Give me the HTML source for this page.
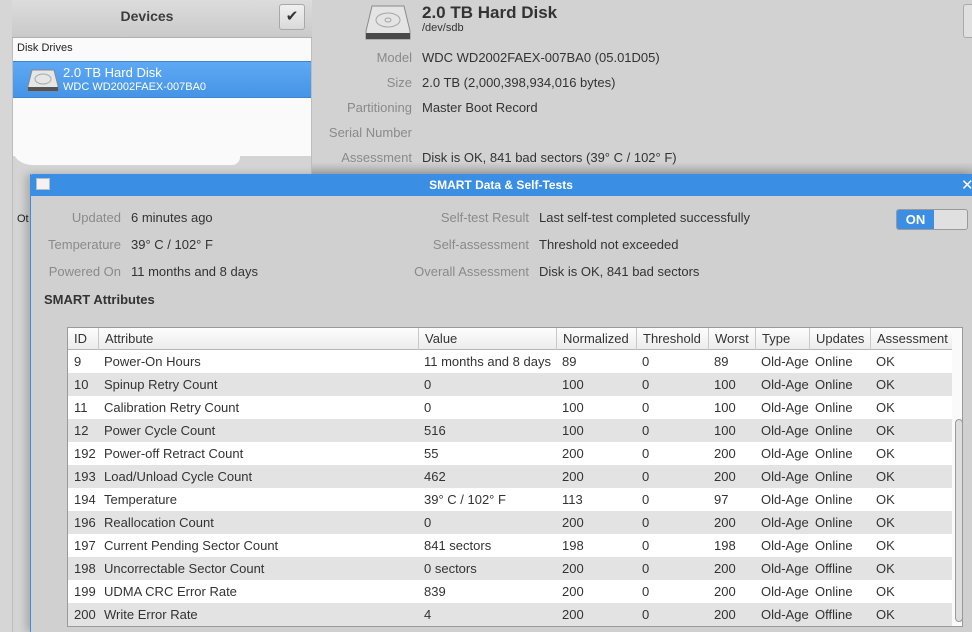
<!DOCTYPE html>
<html><head><meta charset="utf-8"><style>
*{margin:0;padding:0;box-sizing:border-box}
body{width:972px;height:632px;overflow:hidden;background:#d2d2d2;font-family:"Liberation Sans","DejaVu Sans",sans-serif;font-size:13px;color:#333;position:relative}
.abs{position:absolute;white-space:nowrap}
.lbl{color:#8a8a8a;text-align:right}
.hdd{position:absolute}
</style></head><body>
<div class="abs" style="left:0;top:0;width:12px;height:632px;background:#d6d6d6"></div>
<div class="abs" style="left:12px;top:0;width:300px;height:632px;background:#d4d4d4;border-right:1px solid #bdbdbd;border-left:1px solid #bdbdbd"></div>
<div class="abs" style="left:12px;top:0;width:300px;height:38px;background:linear-gradient(#dcdcdc,#cacaca);border-bottom:1px solid #b0b0b0"></div>
<div class="abs" style="left:12px;top:8px;width:270px;text-align:center;font-weight:bold;font-size:14px;color:#3c3c3c">Devices</div>
<div class="abs" style="left:279px;top:4px;width:26px;height:26px;border:1px solid #a8a8a8;border-radius:3px;background:linear-gradient(#f0f0f0,#dadada);text-align:center;line-height:24px;font-size:15px;color:#333">✔</div>
<div class="abs" style="left:13px;top:38px;width:298px;height:118px;background:#fafafa"></div>
<div class="abs" style="left:13px;top:150px;width:227px;height:15px;background:#fafafa;border-radius:0 0 8px 20px/0 0 8px 15px"></div>
<div class="abs" style="left:17px;top:42px;font-size:11px;color:#222">Disk Drives</div>
<div class="abs" style="left:13px;top:61px;width:298px;height:37px;background:linear-gradient(#5ea9f4,#4594e6);border-top:1px solid #3c85d4;border-bottom:1px solid #3c85d4"></div>
<svg class="hdd" style="left:27px;top:69px" width="32" height="24" viewBox="0 0 32 24"><path d="M5 1h22l4 16v5H1v-5z" fill="#e6e6e6" stroke="#888"/><ellipse cx="16" cy="10" rx="8" ry="5" fill="none" stroke="#aaa"/><rect x="1" y="18" width="30" height="4" fill="#555"/></svg>
<div class="abs" style="left:63px;top:65px;color:#fff;font-size:13px">2.0 TB Hard Disk</div>
<div class="abs" style="left:63px;top:81px;color:#fff;font-size:11px">WDC WD2002FAEX-007BA0</div>
<div class="abs" style="left:17px;top:213px;font-size:11px;color:#222">Ot</div>

<svg class="hdd" style="left:365px;top:5px" width="46" height="36" viewBox="0 0 46 36"><path d="M7 1h32l6 25v8H1v-8z" fill="#e4e4e4" stroke="#8a8a8a"/><ellipse cx="23" cy="15" rx="12" ry="7" fill="none" stroke="#a5a5a5"/><ellipse cx="23" cy="15" rx="3" ry="2" fill="none" stroke="#a5a5a5"/><rect x="1" y="28" width="44" height="6" fill="#4a4a4a"/></svg>
<div class="abs" style="left:422px;top:3px;font-size:17px;font-weight:bold;color:#333">2.0 TB Hard Disk</div>
<div class="abs" style="left:422px;top:22px;font-size:11px;color:#333">/dev/sdb</div>
<div class="abs lbl" style="left:312px;width:100px;top:50px">Model</div><div class="abs" style="left:422px;top:50px">WDC WD2002FAEX-007BA0 (05.01D05)</div>
<div class="abs lbl" style="left:312px;width:100px;top:75px">Size</div><div class="abs" style="left:422px;top:75px">2.0 TB (2,000,398,934,016 bytes)</div>
<div class="abs lbl" style="left:312px;width:100px;top:100px">Partitioning</div><div class="abs" style="left:422px;top:100px">Master Boot Record</div>
<div class="abs lbl" style="left:312px;width:100px;top:125px">Serial Number</div>
<div class="abs lbl" style="left:312px;width:100px;top:150px">Assessment</div><div class="abs" style="left:422px;top:150px">Disk is OK, 841 bad sectors (39° C / 102° F)</div>
<div class="abs" style="left:963px;top:4px;width:12px;height:34px;border:1px solid #aaa;border-radius:3px;background:#e0e0e0"></div>
<div class="abs" style="left:312px;top:162px;width:660px;height:12px;background:linear-gradient(rgba(0,0,0,0),rgba(0,0,0,.18))"></div>

<div class="abs" style="left:30px;top:174px;width:942px;height:458px;background:#d0d0d0;border-left:1px solid #3b8be0;box-shadow:-4px 0 8px rgba(0,0,0,.2)"></div>
<div class="abs" style="left:30px;top:174px;width:942px;height:22px;background:#3a8ee3;border-radius:3px 0 0 0"></div>
<div class="abs" style="left:36px;top:178px;width:14px;height:12px;background:#f2f2f2;border:1px solid #bbb"></div>
<div class="abs" style="left:30px;top:178px;width:942px;text-align:center;color:#fff;font-weight:bold;font-size:12px">SMART Data &amp; Self-Tests</div>
<div class="abs" style="left:961px;top:176px;color:#fff;font-weight:bold;font-size:15px">✕</div>

<div class="abs lbl" style="left:30px;width:91px;top:210px">Updated</div><div class="abs" style="left:131px;top:210px">6 minutes ago</div>
<div class="abs lbl" style="left:30px;width:91px;top:237px">Temperature</div><div class="abs" style="left:131px;top:237px">39° C / 102° F</div>
<div class="abs lbl" style="left:30px;width:91px;top:264px">Powered On</div><div class="abs" style="left:131px;top:264px">11 months and 8 days</div>
<div class="abs lbl" style="left:380px;width:149px;top:210px">Self-test Result</div><div class="abs" style="left:539px;top:210px">Last self-test completed successfully</div>
<div class="abs lbl" style="left:380px;width:149px;top:237px">Self-assessment</div><div class="abs" style="left:539px;top:237px">Threshold not exceeded</div>
<div class="abs lbl" style="left:380px;width:149px;top:264px">Overall Assessment</div><div class="abs" style="left:539px;top:264px">Disk is OK, 841 bad sectors</div>
<div class="abs" style="left:896px;top:209px;width:72px;height:21px;border:1px solid #9a9a9a;border-radius:3px;background:#e0e0e0;overflow:hidden"><div style="width:37px;height:21px;background:#3b8ee3;color:#fff;font-weight:bold;text-align:center;line-height:19px">ON</div></div>
<div class="abs" style="left:44px;top:292px;font-weight:bold;font-size:13px;color:#333">SMART Attributes</div>

<div class="abs" style="left:67px;top:327px;width:896px;height:300px;border:1px solid #9a9a9a;background:#fff"></div>
<div id="tbl" class="abs" style="left:68px;top:328px;width:884px"></div>
<div class="abs" style="left:952px;top:328px;width:10px;height:298px;background:#fafafa"></div>
<div class="abs" style="left:955px;top:419px;width:8px;height:203px;border:1px solid #999;border-radius:4px;background:#ddd"></div>
<script>
var cols=[0,30,350,488,568,640,687,741,802,884];
var hd=["ID","Attribute","Value","Normalized","Threshold","Worst","Type","Updates","Assessment"];
var rows=[["9","Power-On Hours","11 months and 8 days","89","0","89","Old-Age","Online","OK"],
["10","Spinup Retry Count","0","100","0","100","Old-Age","Online","OK"],
["11","Calibration Retry Count","0","100","0","100","Old-Age","Online","OK"],
["12","Power Cycle Count","516","100","0","100","Old-Age","Online","OK"],
["192","Power-off Retract Count","55","200","0","200","Old-Age","Online","OK"],
["193","Load/Unload Cycle Count","462","200","0","200","Old-Age","Online","OK"],
["194","Temperature","39° C / 102° F","113","0","97","Old-Age","Online","OK"],
["196","Reallocation Count","0","200","0","200","Old-Age","Online","OK"],
["197","Current Pending Sector Count","841 sectors","198","0","198","Old-Age","Online","OK"],
["198","Uncorrectable Sector Count","0 sectors","200","0","200","Old-Age","Offline","OK"],
["199","UDMA CRC Error Rate","839","200","0","200","Old-Age","Online","OK"],
["200","Write Error Rate","4","200","0","200","Old-Age","Offline","OK"]];
var h='<div style="position:relative;height:22px;background:linear-gradient(#fdfdfd,#ececec);border-bottom:1px solid #b5b5b5">';
hd.forEach(function(t,i){h+='<div style="position:absolute;left:'+cols[i]+'px;width:'+(cols[i+1]-cols[i])+'px;top:0;height:22px;line-height:22px;padding-left:6px;'+(i?'border-left:1px solid #c8c8c8;':'')+'">'+t+'</div>'});
h+='</div>';
rows.forEach(function(r,k){h+='<div style="position:relative;height:23px;background:'+(k%2?'#e3e3e3':'#fff')+'">';
r.forEach(function(t,i){h+='<div style="position:absolute;left:'+cols[i]+'px;top:0;line-height:23px;padding-left:6px;white-space:nowrap">'+t+'</div>'});h+='</div>'});
document.getElementById('tbl').innerHTML=h;
</script>
</body></html>
